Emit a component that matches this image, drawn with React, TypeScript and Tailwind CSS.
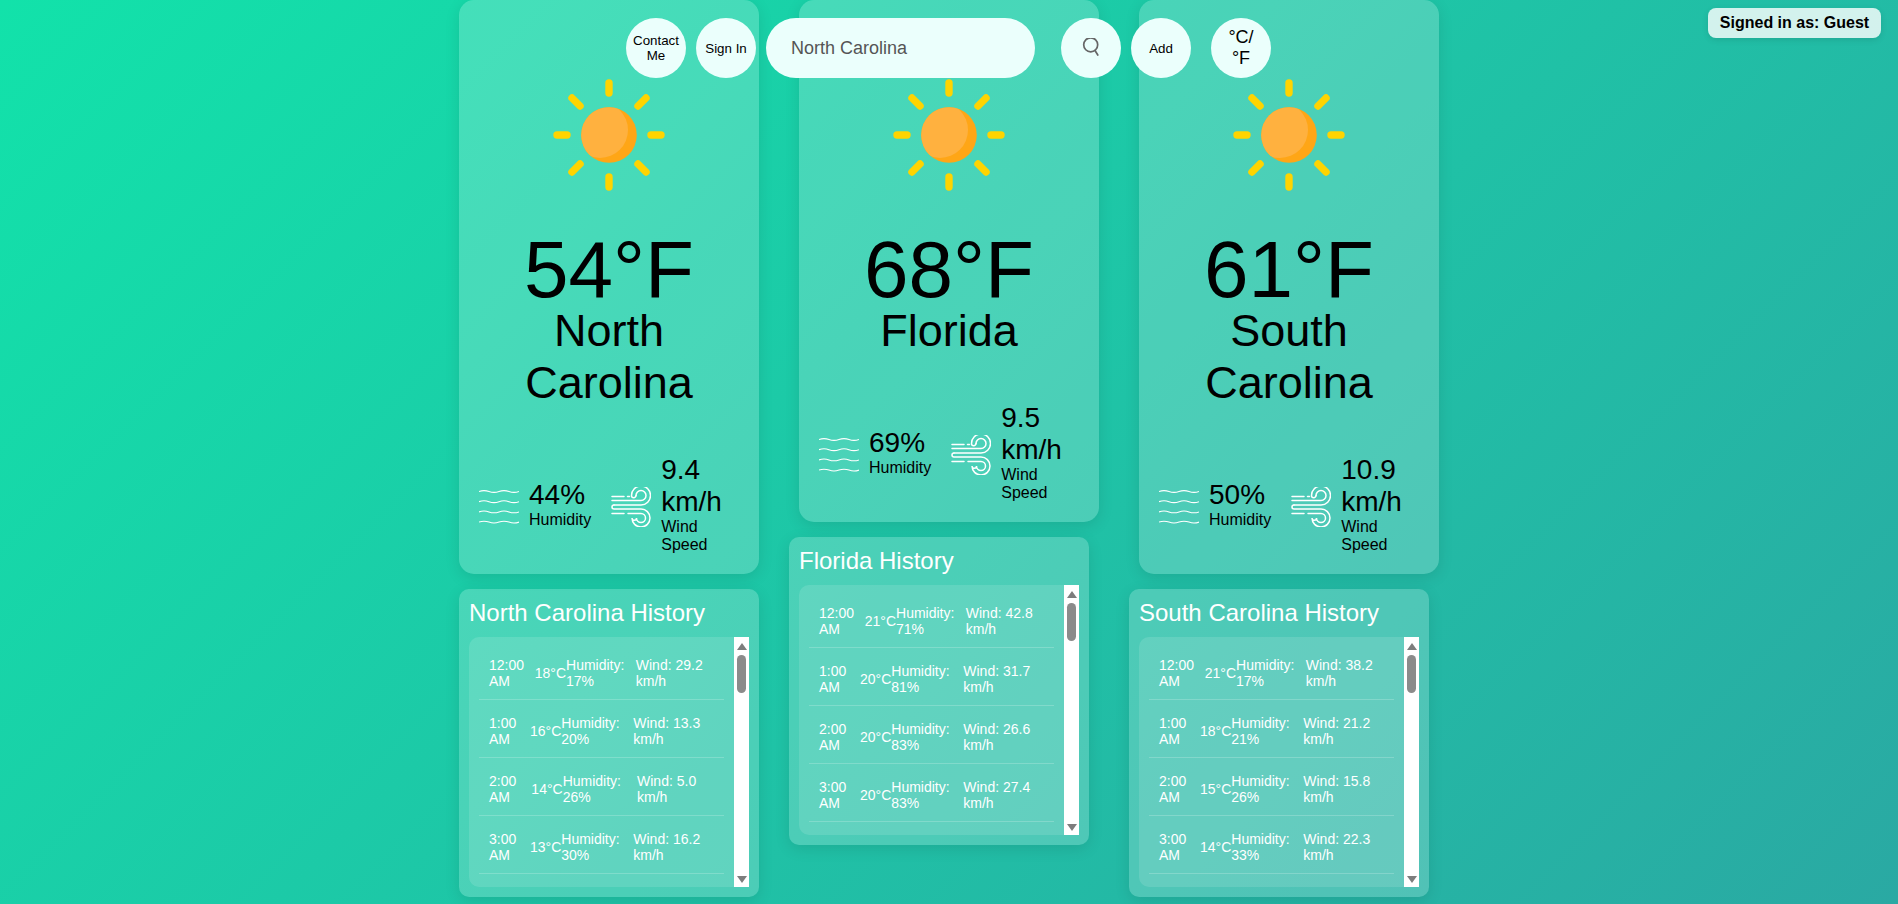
import React from 'react';

type HourRow = { time: string; temp: string; humidity: string; wind: string };

type Place = {
  city: string;
  temp: string;
  humidity: string;
  wind: string;
  history: HourRow[];
};

const places: Place[] = [
  {
    city: 'North Carolina',
    temp: '54°F',
    humidity: '44%',
    wind: '9.4 km/h',
    history: [
      { time: '12:00 AM', temp: '18°C', humidity: '17%', wind: '29.2' },
      { time: '1:00 AM', temp: '16°C', humidity: '20%', wind: '13.3' },
      { time: '2:00 AM', temp: '14°C', humidity: '26%', wind: '5.0' },
      { time: '3:00 AM', temp: '13°C', humidity: '30%', wind: '16.2' },
    ],
  },
  {
    city: 'Florida',
    temp: '68°F',
    humidity: '69%',
    wind: '9.5 km/h',
    history: [
      { time: '12:00 AM', temp: '21°C', humidity: '71%', wind: '42.8' },
      { time: '1:00 AM', temp: '20°C', humidity: '81%', wind: '31.7' },
      { time: '2:00 AM', temp: '20°C', humidity: '83%', wind: '26.6' },
      { time: '3:00 AM', temp: '20°C', humidity: '83%', wind: '27.4' },
    ],
  },
  {
    city: 'South Carolina',
    temp: '61°F',
    humidity: '50%',
    wind: '10.9 km/h',
    history: [
      { time: '12:00 AM', temp: '21°C', humidity: '17%', wind: '38.2' },
      { time: '1:00 AM', temp: '18°C', humidity: '21%', wind: '21.2' },
      { time: '2:00 AM', temp: '15°C', humidity: '26%', wind: '15.8' },
      { time: '3:00 AM', temp: '14°C', humidity: '33%', wind: '22.3' },
    ],
  },
];

const SunIcon = () => (
  <svg width="170" height="170" viewBox="-85 -85 170 170">
    <defs>
      <clipPath id="sun-disc">
        <circle r="27.8" />
      </clipPath>
    </defs>
    <g stroke="#ffd400" strokeWidth="7.4" strokeLinecap="round">
      <path d="M0 -52V-42" />
      <path d="M0 52V42" />
      <path d="M-52 0H-42" />
      <path d="M52 0H42" />
      <path d="M-37 -37L-29 -29" />
      <path d="M37 -37L29 -29" />
      <path d="M-37 37L-29 29" />
      <path d="M37 37L29 29" />
    </g>
    <circle r="27.8" fill="#ffa616" />
    <circle cx="-9" cy="-5" r="28" fill="#ffb13f" clipPath="url(#sun-disc)" />
  </svg>
);

const WavesIcon = () => (
  <svg width="40" height="40" viewBox="0 0 40 40" fill="none" stroke="#fff" strokeWidth="1.1" className="shrink-0 mt-[5px]">
    {[4.5, 14.7, 24.9, 35.1].map((y) => (
      <path
        key={y}
        d={`M0 ${y}c3.3-1.2 6.700-1.200 10 0s6.700 1.200 10 0 6.700-1.200 10 0 6.700 1.200 10 0`}
      />
    ))}
  </svg>
);

const WindIcon = () => (
  <svg width="40" height="40" viewBox="0 0 40 40" fill="none" stroke="#fff" strokeWidth="1.5" strokeLinecap="round" className="shrink-0 mt-[5px]">
    <path d="M1 9.500H13" />
    <path d="M16.500 9.500H18.500" />
    <path d="M1 13.500H30A5 5 0 1 0 25 8.500" />
    <path d="M3 18H30A9.500 9.500 0 1 0 20.500 8.500A2.250 2.250 0 0 0 25 8.500" />
    <path d="M3 18A2 2 0 0 0 3 22H30A9 9 0 1 1 21 31A2.250 2.250 0 0 0 25.500 31A4.500 4.500 0 1 0 30 26.500H17" />
    <path d="M1 26.500H13" />
  </svg>
);

const SearchIcon = () => (
  <svg width="20" height="20" viewBox="0 0 20 20" fill="none" stroke="#666" strokeWidth="1.7">
    <circle cx="9.700" cy="6.800" r="7" />
    <path d="M14 12.500l2.800 4.500" strokeLinecap="round" />
  </svg>
);

const WeatherCard = ({ place, className }: { place: Place; className: string }) => (
  <div className={`w-[300px] rounded-[15px] bg-white/20 shadow-[0_4px_15px_rgba(0,0,0,0.1)] px-5 pb-5 pt-[50px] flex flex-col items-center text-center ${className}`}>
    <SunIcon />
    <div className="text-[80px] leading-[70px] mt-[15px]">{place.temp}</div>
    <div className="text-[45px] leading-[52px]">{place.city}</div>
    <div className="flex items-center gap-5 mt-[45px] w-full text-left">
      <div className="flex items-center gap-2.5">
        <WavesIcon />
        <div>
          <p className="text-[28px] leading-8">{place.humidity}</p>
          <p className="text-base leading-[18px]">Humidity</p>
        </div>
      </div>
      <div className="flex items-center gap-2.5 min-w-0">
        <WindIcon />
        <div className="min-w-0">
          <p className="text-[28px] leading-8">{place.wind}</p>
          <p className="text-base leading-[18px]">Wind Speed</p>
        </div>
      </div>
    </div>
  </div>
);

const HistoryPanel = ({ place }: { place: Place }) => (
  <div className="w-[300px] mt-[15px] rounded-[10px] bg-white/20 shadow-[0_4px_15px_rgba(0,0,0,0.1)] p-2.5 text-white">
    <h3 className="text-2xl leading-7 mb-2.5">{place.city} History</h3>
    <div className="flex h-[250px] rounded-l-[10px] bg-white/[0.12] overflow-hidden">
      <div className="flex-1 min-w-0 p-2.5 overflow-hidden">
        {place.history.map((row) => (
          <div key={row.time} className="flex items-center justify-between p-2.5 mb-[5px] border-b border-white/20 text-sm leading-4">
            <span>{row.time}</span>
            <span>{row.temp}</span>
            <span>Humidity: {row.humidity}</span>
            <span>Wind: {row.wind} km/h</span>
          </div>
        ))}
      </div>
      <div className="w-[15px] shrink-0 bg-white flex flex-col items-center justify-between pt-[6px] pb-[4px]">
        <div className="flex flex-col items-center gap-[5px] w-full">
          <div className="w-0 h-0 border-x-[5px] border-x-transparent border-b-[7px] border-b-[#7d7d7d]" />
          <div className="w-[9px] h-[38px] rounded-[5px] bg-[#8b8b8b]" />
        </div>
        <div className="w-0 h-0 border-x-[5px] border-x-transparent border-t-[7px] border-t-[#7d7d7d]" />
      </div>
    </div>
  </div>
);

export default function App() {
  return (
    <div className="relative min-h-screen bg-[linear-gradient(135deg,#12e2aa,#2aa9a3)] font-['Liberation_Sans',Arial,sans-serif] text-black">
      <div className="flex justify-center items-start gap-[30px]">
        {places.map((place, i) => (
          <div key={place.city} className={i === 0 ? 'w-[300px]' : 'w-[310px]'}>
            <WeatherCard place={place} className={i === 0 ? '' : 'ml-2.5'} />
            <HistoryPanel place={place} />
          </div>
        ))}
      </div>

      <div className="absolute left-[626px] top-[18px] flex items-center">
        <button className="w-[60px] h-[60px] rounded-full bg-[#ebfffc] text-[13.333px] leading-[15px]">Contact Me</button>
        <button className="w-[60px] h-[60px] rounded-full bg-[#ebfffc] text-[13.333px] leading-[15px] ml-2.5">Sign In</button>
        <div className="w-[269px] h-[60px] rounded-full bg-[#ebfffc] ml-2.5 pl-[25px] flex items-center text-lg text-[#555]">North Carolina</div>
        <button className="w-[60px] h-[60px] rounded-full bg-[#ebfffc] ml-[26px] flex items-center justify-center">
          <SearchIcon />
        </button>
        <button className="w-[60px] h-[60px] rounded-full bg-[#ebfffc] text-[13.333px] leading-[15px] ml-2.5">Add</button>
        <button className="w-[60px] h-[60px] rounded-full bg-[#ebfffc] text-lg leading-[21px] ml-5 px-4">°C/°F</button>
      </div>

      <div className="absolute right-[17px] top-2 w-[173px] h-[30px] flex items-center justify-center whitespace-nowrap rounded-lg bg-white/80 shadow-[0_2px_6px_rgba(0,0,0,0.1)] text-base font-bold">
        Signed in as: Guest
      </div>
    </div>
  );
}
